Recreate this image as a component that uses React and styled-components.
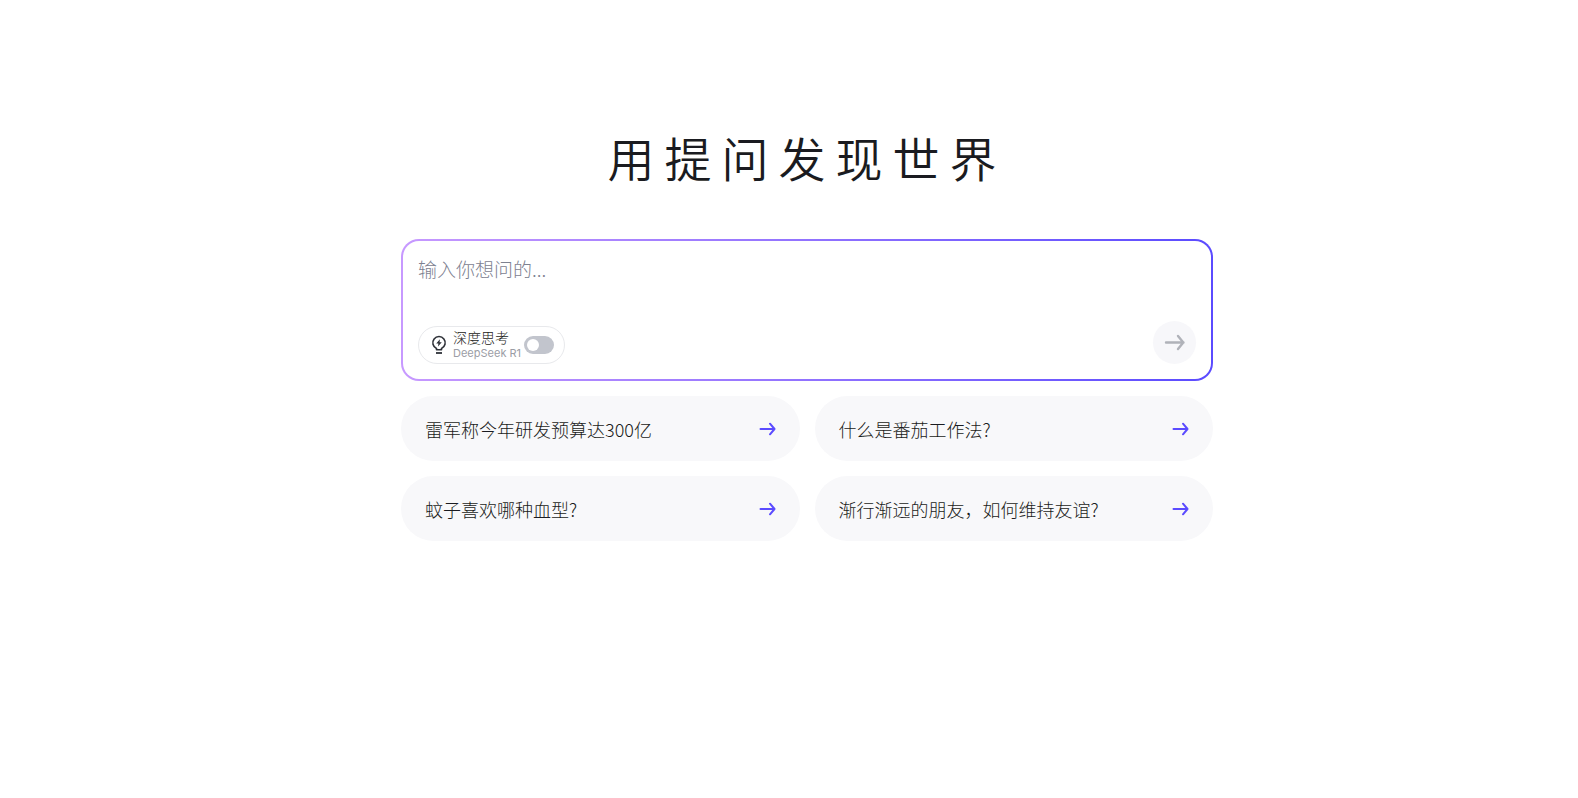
import React, { useState } from "react";
import styled, { createGlobalStyle } from "styled-components";

const GlobalStyle = createGlobalStyle`
  * {
    box-sizing: border-box;
  }
  body {
    margin: 0;
    background: #fff;
    color: #1a1b20;
    font-family: "Noto Sans CJK SC", sans-serif;
    font-weight: 300;
  }
  button, input, textarea {
    font: inherit;
    color: inherit;
  }
`;

const Page = styled.main`
  display: flex;
  flex-direction: column;
  align-items: center;
  padding: 121px 0 40px 36px;
`;

const Content = styled.div`
  width: 100%;
  max-width: 812px;
`;

const Title = styled.h1`
  margin: 0 0 46px;
  font-size: 47px;
  line-height: 72px;
  font-weight: 350;
  letter-spacing: 10px;
  text-align: center;
`;

const AskBox = styled.form`
  display: flex;
  flex-direction: column;
  padding: 15px;
  border: 2px solid transparent;
  border-radius: 18px;
  background: linear-gradient(#fff, #fff) padding-box,
    linear-gradient(90deg, #c799ff, #5b4bff) border-box;
`;

const Question = styled.textarea`
  width: 100%;
  height: 65px;
  padding: 0;
  border: 0;
  outline: 0;
  resize: none;
  background: transparent;
  font-size: 19px;
  line-height: 26px;
  &::placeholder {
    color: #7d8190;
    opacity: 1;
  }
`;

const Toolbar = styled.div`
  display: flex;
  align-items: flex-end;
  justify-content: space-between;
`;

const ThinkPill = styled.label`
  display: flex;
  align-items: center;
  height: 38px;
  padding: 0 10px 0 12px;
  border: 1px solid #e8e9ec;
  border-radius: 19px;
  cursor: pointer;
`;

const ThinkText = styled.span`
  display: flex;
  flex-direction: column;
  margin: 0 3px 0 6px;
  padding-bottom: 2px;
`;

const ThinkName = styled.span`
  font-size: 14px;
  line-height: 17px;
`;

const ThinkModel = styled.span`
  color: #9b9da5;
  font-family: Inter, sans-serif;
  font-size: 11px;
  font-weight: 400;
  line-height: 14px;
`;

const Switch = styled.input`
  appearance: none;
  display: flex;
  align-items: center;
  width: 30px;
  height: 18px;
  margin: 0;
  padding: 0 3px;
  border-radius: 9px;
  background: #c2c5cd;
  cursor: pointer;
  &::before {
    content: "";
    width: 12px;
    height: 12px;
    border-radius: 50%;
    background: #fff;
  }
  &:checked {
    justify-content: flex-end;
    background: #5b4bff;
  }
`;

const Submit = styled.button`
  display: flex;
  align-items: center;
  justify-content: center;
  width: 43px;
  height: 43px;
  padding: 0;
  border: 0;
  border-radius: 50%;
  background: #f7f7fa;
  color: #b0b2b9;
  cursor: pointer;
`;

const Suggestions = styled.div`
  display: grid;
  grid-template-columns: 1fr 1fr;
  gap: 15px;
  margin-top: 15px;
`;

const Suggestion = styled.button`
  display: flex;
  align-items: center;
  justify-content: space-between;
  height: 65px;
  padding: 0 23px 0 24px;
  border: 0;
  border-radius: 33px;
  background: #f8f8fa;
  font-size: 18px;
  line-height: 26px;
  text-align: left;
  cursor: pointer;
  svg {
    color: #5b4bff;
  }
`;

const questions = [
  "雷军称今年研发预算达300亿",
  "什么是番茄工作法?",
  "蚊子喜欢哪种血型?",
  "渐行渐远的朋友，如何维持友谊?",
];

const BulbIcon = () => (
  <svg width="16" height="20" viewBox="0 0 16 20" fill="none">
    <path
      d="M5.5 14.8v-1.4A6.2 6.2 0 1 1 10.5 13.4v1.4z"
      stroke="#2e3138"
      strokeWidth="1.6"
      strokeLinejoin="round"
    />
    <path d="M5 18h6" stroke="#2e3138" strokeWidth="1.8" />
    <path d="M8.9 4.2 5.2 8.4h2.2L7 11.4l3.8-4.2H8.6z" fill="#2e3138" />
  </svg>
);

const SendIcon = () => (
  <svg width="22" height="18" viewBox="0 0 22 18" fill="none">
    <path
      d="M2 8.5h17.5M14 2l5.3 6.5L14 15"
      stroke="currentColor"
      strokeWidth="2.4"
      strokeLinecap="round"
      strokeLinejoin="round"
    />
  </svg>
);

const ArrowIcon = () => (
  <svg width="18" height="14" viewBox="0 0 18 14" fill="none">
    <path
      d="M1.5 7h14M11 1.7 15.5 7 11 12.3"
      stroke="currentColor"
      strokeWidth="2"
      strokeLinecap="round"
      strokeLinejoin="round"
    />
  </svg>
);

const App = () => {
  const [text, setText] = useState("");
  const [deep, setDeep] = useState(false);
  return (
    <>
      <GlobalStyle />
      <Page>
        <Content>
          <Title>用提问发现世界</Title>
          <AskBox onSubmit={(e) => e.preventDefault()}>
            <Question
              aria-label="输入你想问的"
              placeholder="输入你想问的..."
              value={text}
              onChange={(e) => setText(e.target.value)}
            />
            <Toolbar>
              <ThinkPill>
                <BulbIcon />
                <ThinkText>
                  <ThinkName>深度思考</ThinkName>
                  <ThinkModel>DeepSeek R1</ThinkModel>
                </ThinkText>
                <Switch
                  type="checkbox"
                  role="switch"
                  checked={deep}
                  onChange={(e) => setDeep(e.target.checked)}
                />
              </ThinkPill>
              <Submit type="submit" aria-label="发送">
                <SendIcon />
              </Submit>
            </Toolbar>
          </AskBox>
          <Suggestions>
            {questions.map((question) => (
              <Suggestion
                key={question}
                type="button"
                onClick={() => setText(question)}
              >
                {question}
                <ArrowIcon />
              </Suggestion>
            ))}
          </Suggestions>
        </Content>
      </Page>
    </>
  );
};

export default App;
